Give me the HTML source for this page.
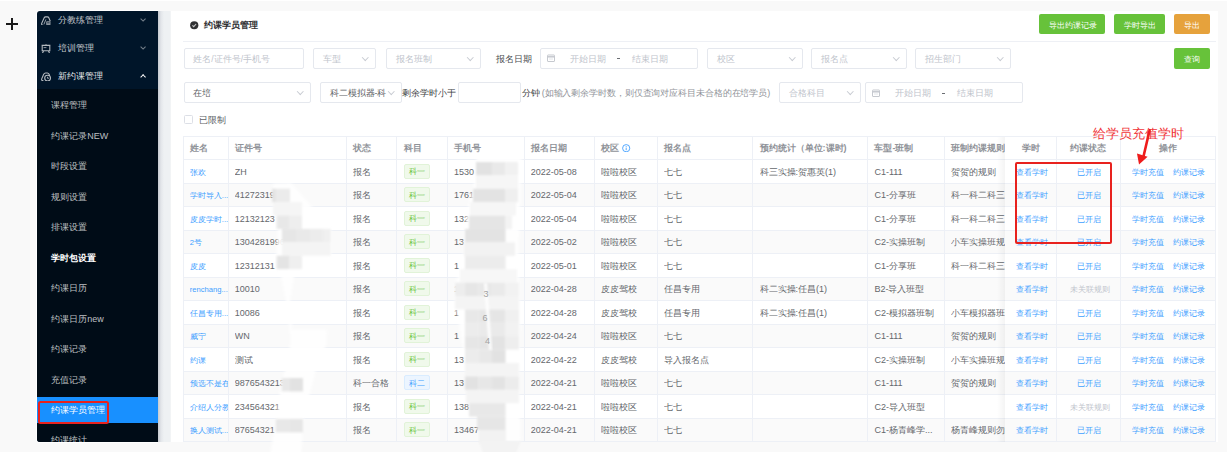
<!DOCTYPE html><html><head><meta charset="utf-8"><style>
*{box-sizing:border-box;margin:0;padding:0}
html,body{width:1227px;height:452px;overflow:hidden;background:#f9f9f9;font-family:"Liberation Sans", sans-serif;}
.abs{position:absolute}
.t{position:absolute;white-space:nowrap;line-height:1;}
.inp{position:absolute;border:1px solid #e5e8ee;border-radius:2px;background:#fff}
.chev{position:absolute;width:4.5px;height:4.5px;border-right:1px solid #c8cbd2;border-bottom:1px solid #c8cbd2;transform:rotate(45deg)}
.btn{position:absolute;height:20px;border-radius:2px}
.ln{position:absolute;background:#edf0f6}
</style></head><body>
<div class="abs" style="left:0;top:0;width:1227px;height:1px;background:#fff"></div>
<div class="abs" style="left:6px;top:23px;width:12px;height:2px;background:#1a1a1a"></div>
<div class="abs" style="left:11px;top:18px;width:2px;height:12px;background:#1a1a1a"></div>
<div class="abs" style="left:36px;top:10px;width:122px;height:433px;background:#fff;border-radius:4px 0 0 4px"></div>
<div class="abs" style="left:37px;top:11px;width:121px;height:431px;background:#001529;border-radius:3px 0 0 3px;overflow:hidden">
<div class="abs" style="left:0;top:78px;width:121px;height:360px;background:#000c17"></div>
</div>
<div class="t" style="left:57.70px;top:16px;font-size:9px;color:rgba(255,255,255,.78);font-weight:normal;">分教练管理</div>
<div class="abs" style="left:141.2px;top:16.85px;width:4.2px;height:4.2px;border-right:1px solid rgba(255,255,255,.45);border-bottom:1px solid rgba(255,255,255,.45);transform:rotate(45deg)"></div>
<div class="t" style="left:57.70px;top:44px;font-size:9px;color:rgba(255,255,255,.78);font-weight:normal;">培训管理</div>
<div class="abs" style="left:141.2px;top:45.00px;width:4.2px;height:4.2px;border-right:1px solid rgba(255,255,255,.45);border-bottom:1px solid rgba(255,255,255,.45);transform:rotate(45deg)"></div>
<div class="t" style="left:57.70px;top:72px;font-size:9px;color:rgba(255,255,255,.92);font-weight:normal;">新约课管理</div>
<div class="abs" style="left:141.2px;top:75.10px;width:4.2px;height:4.2px;border-left:1.5px solid #fff;border-top:1.5px solid #fff;transform:rotate(45deg)"></div>
<svg class="abs" style="left:41px;top:15.5px" width="10" height="9.5" viewBox="0 0 10 9.5"><path d="M1.6 8.7 Q0.2 8.7 0.7 7.4 L3.2 1.8 Q3.6 0.9 4.6 0.9 H6.5 Q7.4 0.9 7.8 1.8 L9.3 5.2" fill="none" stroke="rgba(255,255,255,.7)" stroke-width="1.1"/><path d="M2.9 8.4 L4.9 3.4" stroke="rgba(255,255,255,.7)" stroke-width="0.8"/><rect x="5.2" y="5.3" width="4.3" height="3.7" rx="0.6" fill="rgba(255,255,255,.55)"/><path d="M6.2 6.8 H8.6" stroke="#001529" stroke-width="0.7"/></svg>
<svg class="abs" style="left:41px;top:43.8px" width="10" height="9.5" viewBox="0 0 10 9.5"><path d="M5 0.3 V1.2 M0.6 1.4 H9.4 M1.2 1.4 V6.8 H8.8 V1.4 M2.6 6.8 L1.5 9.2 M7.4 6.8 L8.5 9.2" fill="none" stroke="rgba(255,255,255,.7)" stroke-width="1.1"/><path d="M2.6 3.6 H5.4" stroke="rgba(255,255,255,.7)" stroke-width="0.8"/></svg>
<svg class="abs" style="left:41px;top:71.8px" width="10.5" height="9.5" viewBox="0 0 10.5 9.5"><path d="M2.4 8.6 H1.8 Q0.3 8.6 0.7 6.9 L2.7 2.2 Q3.3 1 4.6 1 H6.3 Q7.5 1 8.1 2.3 L8.6 3.4" fill="none" stroke="rgba(255,255,255,.7)" stroke-width="1.1"/><circle cx="6.6" cy="6.1" r="2.9" fill="#001529" stroke="rgba(255,255,255,.7)" stroke-width="1.1"/><path d="M6.6 4.8 V6.3 H7.8" fill="none" stroke="rgba(255,255,255,.7)" stroke-width="0.9"/></svg>
<div class="t" style="left:51.30px;top:101px;font-size:9px;color:rgba(255,255,255,.74);font-weight:normal;">课程管理</div>
<div class="t" style="left:51.30px;top:132px;font-size:9px;color:rgba(255,255,255,.74);font-weight:normal;">约课记录NEW</div>
<div class="t" style="left:51.30px;top:162px;font-size:9px;color:rgba(255,255,255,.74);font-weight:normal;">时段设置</div>
<div class="t" style="left:51.30px;top:193px;font-size:9px;color:rgba(255,255,255,.74);font-weight:normal;">规则设置</div>
<div class="t" style="left:51.30px;top:223px;font-size:9px;color:rgba(255,255,255,.74);font-weight:normal;">排课设置</div>
<div class="t" style="left:51.30px;top:254px;font-size:9px;color:#fff;font-weight:bold;">学时包设置</div>
<div class="t" style="left:51.30px;top:284px;font-size:9px;color:rgba(255,255,255,.74);font-weight:normal;">约课日历</div>
<div class="t" style="left:51.30px;top:315px;font-size:9px;color:rgba(255,255,255,.74);font-weight:normal;">约课日历new</div>
<div class="t" style="left:51.30px;top:345px;font-size:9px;color:rgba(255,255,255,.74);font-weight:normal;">约课记录</div>
<div class="t" style="left:51.30px;top:376px;font-size:9px;color:rgba(255,255,255,.74);font-weight:normal;">充值记录</div>
<div class="abs" style="left:37px;top:397px;width:121px;height:26px;background:#1890ff"></div>
<div class="t" style="left:51.30px;top:406px;font-size:9px;color:#fff;font-weight:normal;">约课学员管理</div>
<div class="abs" style="left:37px;top:428px;width:121px;height:14px;overflow:hidden;border-radius:0 0 0 4px">
<div class="t" style="left:14.3px;top:8.45px;font-size:9px;color:rgba(255,255,255,.74)">约课统计</div>
</div>
<div class="abs" style="left:38px;top:401px;width:71px;height:22.5px;border:2px solid #e8221e;border-radius:2.5px"></div>
<div class="abs" style="left:158px;top:11px;width:13px;height:431px;background:linear-gradient(to right,#c5cad0 0px,#e3e6ea 3px,#eef1f3 6px,#eef1f3 12px,#f6f7f8 13px)"></div>
<div class="abs" style="left:170.5px;top:11px;width:1047.2px;height:430.6px;background:#fff"></div>
<svg class="abs" style="left:190px;top:21px" width="8.5" height="8.5" viewBox="0 0 8.5 8.5"><circle cx="4.25" cy="4.25" r="4.1" fill="#303133"/><path d="M2.4 4.4 L3.7 5.6 L6.1 3.0" fill="none" stroke="#c8c8c8" stroke-width="1.1"/></svg>
<div class="t" style="left:204.20px;top:21px;font-size:9px;color:#303133;font-weight:bold;">约课学员管理</div>
<div class="ln" style="left:183px;top:41px;width:1033px;height:1px;background:#eef0f5"></div>
<div class="btn" style="left:1039.1px;top:14.3px;width:66.10000000000014px;height:20.2px;background:#67c23a"></div>
<div class="t" style="left:1049.35px;top:22px;font-size:7.6px;color:#fff;font-weight:normal;">导出约课记录</div>
<div class="btn" style="left:1114.1px;top:14.3px;width:51.0px;height:20.2px;background:#67c23a"></div>
<div class="t" style="left:1124.40px;top:22px;font-size:7.6px;color:#fff;font-weight:normal;">学时导出</div>
<div class="btn" style="left:1173.8px;top:14.3px;width:36.0px;height:20.2px;background:#e6a23c"></div>
<div class="t" style="left:1184.20px;top:22px;font-size:7.6px;color:#fff;font-weight:normal;">导出</div>
<div class="btn" style="left:1173.8px;top:48px;width:36.0px;height:20.599999999999994px;background:#67c23a"></div>
<div class="t" style="left:1184.20px;top:56px;font-size:7.6px;color:#fff;font-weight:normal;">查询</div>
<div class="inp" style="left:183.5px;top:48px;width:120.90px;height:20.50px"></div>
<div class="t" style="left:193.30px;top:55px;font-size:8.6px;color:#c0c4cc;font-weight:normal;">姓名/证件号/手机号</div>
<div class="inp" style="left:313.4px;top:48px;width:62.90px;height:20.50px"></div>
<div class="t" style="left:323.20px;top:55px;font-size:8.6px;color:#c0c4cc;font-weight:normal;">车型</div>
<div class="chev" style="left:363.30px;top:54.95px"></div>
<div class="inp" style="left:386px;top:48px;width:94.50px;height:20.50px"></div>
<div class="t" style="left:395.80px;top:55px;font-size:8.6px;color:#c0c4cc;font-weight:normal;">报名班制</div>
<div class="chev" style="left:467.50px;top:54.95px"></div>
<div class="t" style="left:496.00px;top:55px;font-size:9px;color:#4a4c50;font-weight:500;">报名日期</div>
<div class="inp" style="left:540.2px;top:48px;width:158.30px;height:20.50px"></div>
<svg class="abs" style="left:547.00px;top:54.25px" width="8" height="8" viewBox="0 0 8 8"><rect x="0.5" y="1" width="7" height="6.5" rx="0.5" fill="none" stroke="#c6c9cf" stroke-width="1"/><path d="M0.5 2.8 H7.5" stroke="#c6c9cf" stroke-width="1.5"/><path d="M2 5 H6" stroke="#dcdfe4" stroke-width="0.8"/></svg>
<div class="t" style="left:569.70px;top:55px;font-size:8.6px;color:#c0c4cc;font-weight:normal;">开始日期</div>
<div class="abs" style="left:617.20px;top:58.25px;width:3px;height:1.2px;background:#6a6d72"></div>
<div class="t" style="left:631.90px;top:55px;font-size:8.6px;color:#c0c4cc;font-weight:normal;">结束日期</div>
<div class="inp" style="left:707.3px;top:48px;width:95.70px;height:20.50px"></div>
<div class="t" style="left:717.10px;top:55px;font-size:8.6px;color:#c0c4cc;font-weight:normal;">校区</div>
<div class="chev" style="left:790.00px;top:54.95px"></div>
<div class="inp" style="left:811.4px;top:48px;width:95.40px;height:20.50px"></div>
<div class="t" style="left:821.20px;top:55px;font-size:8.6px;color:#c0c4cc;font-weight:normal;">报名点</div>
<div class="chev" style="left:893.80px;top:54.95px"></div>
<div class="inp" style="left:915.4px;top:48px;width:95.80px;height:20.50px"></div>
<div class="t" style="left:925.20px;top:55px;font-size:8.6px;color:#c0c4cc;font-weight:normal;">招生部门</div>
<div class="chev" style="left:998.20px;top:54.95px"></div>
<div class="inp" style="left:183.6px;top:82.3px;width:127.00px;height:20.70px"></div>
<div class="t" style="left:193.40px;top:89px;font-size:8.6px;color:#606266;font-weight:normal;">在培</div>
<div class="chev" style="left:297.60px;top:89.35px"></div>
<div class="inp" style="left:319.8px;top:82.3px;width:82.60px;height:20.70px"></div>
<div class="t" style="left:329.50px;top:89px;font-size:8.6px;color:#606266;font-weight:normal;">科二模拟器-科</div>
<div class="chev" style="left:389.40px;top:89.35px"></div>
<div class="t" style="left:402.40px;top:89px;font-size:9px;color:#3a3c40;font-weight:500;">剩余学时小于</div>
<div class="inp" style="left:457.8px;top:82.3px;width:63.40px;height:20.70px"></div>
<div class="t" style="left:521.70px;top:89px;font-size:9px;color:#3a3c40;font-weight:500;">分钟</div>
<div class="t" style="left:541.80px;top:89px;font-size:9px;color:#909399;font-weight:normal;letter-spacing:-0.1px">(如输入剩余学时数，则仅查询对应科目未合格的在培学员)</div>
<div class="inp" style="left:779.3px;top:82.3px;width:82.10px;height:20.70px"></div>
<div class="t" style="left:789.10px;top:89px;font-size:8.6px;color:#c0c4cc;font-weight:normal;">合格科目</div>
<div class="chev" style="left:848.40px;top:89.35px"></div>
<div class="inp" style="left:865px;top:82.3px;width:158.40px;height:20.70px"></div>
<svg class="abs" style="left:871.80px;top:88.65px" width="8" height="8" viewBox="0 0 8 8"><rect x="0.5" y="1" width="7" height="6.5" rx="0.5" fill="none" stroke="#c6c9cf" stroke-width="1"/><path d="M0.5 2.8 H7.5" stroke="#c6c9cf" stroke-width="1.5"/><path d="M2 5 H6" stroke="#dcdfe4" stroke-width="0.8"/></svg>
<div class="t" style="left:894.50px;top:89px;font-size:8.6px;color:#c0c4cc;font-weight:normal;">开始日期</div>
<div class="abs" style="left:942.00px;top:92.65px;width:3px;height:1.2px;background:#6a6d72"></div>
<div class="t" style="left:956.70px;top:89px;font-size:8.6px;color:#c0c4cc;font-weight:normal;">结束日期</div>
<div class="abs" style="left:183.6px;top:115.4px;width:9px;height:9px;border:1px solid #dcdfe6;border-radius:1.5px;background:#fff"></div>
<div class="t" style="left:199.30px;top:116px;font-size:9px;color:#606266;font-weight:normal;">已限制</div>
<div class="abs" style="left:183.2px;top:183.02px;width:1032.3px;height:23.52px;background:#fafafa"></div>
<div class="abs" style="left:183.2px;top:230.06px;width:1032.3px;height:23.52px;background:#fafafa"></div>
<div class="abs" style="left:183.2px;top:277.10px;width:1032.3px;height:23.52px;background:#fafafa"></div>
<div class="abs" style="left:183.2px;top:324.14px;width:1032.3px;height:23.52px;background:#fafafa"></div>
<div class="abs" style="left:183.2px;top:371.18px;width:1032.3px;height:23.52px;background:#fafafa"></div>
<div class="abs" style="left:183.2px;top:418.22px;width:1032.3px;height:23.52px;background:#fafafa"></div>
<div class="ln" style="left:183.2px;top:136px;width:1032.3px;height:1px"></div>
<div class="ln" style="left:183.2px;top:159px;width:1032.3px;height:1px"></div>
<div class="ln" style="left:183.2px;top:183px;width:1032.3px;height:1px"></div>
<div class="ln" style="left:183.2px;top:206px;width:1032.3px;height:1px"></div>
<div class="ln" style="left:183.2px;top:230px;width:1032.3px;height:1px"></div>
<div class="ln" style="left:183.2px;top:253px;width:1032.3px;height:1px"></div>
<div class="ln" style="left:183.2px;top:277px;width:1032.3px;height:1px"></div>
<div class="ln" style="left:183.2px;top:300px;width:1032.3px;height:1px"></div>
<div class="ln" style="left:183.2px;top:324px;width:1032.3px;height:1px"></div>
<div class="ln" style="left:183.2px;top:347px;width:1032.3px;height:1px"></div>
<div class="ln" style="left:183.2px;top:371px;width:1032.3px;height:1px"></div>
<div class="ln" style="left:183.2px;top:394px;width:1032.3px;height:1px"></div>
<div class="ln" style="left:183.2px;top:418px;width:1032.3px;height:1px"></div>
<div class="ln" style="left:183.2px;top:441px;width:1032.3px;height:1px"></div>
<div class="ln" style="left:183px;top:136.6px;width:1px;height:305.14px"></div>
<div class="ln" style="left:228px;top:136.6px;width:1px;height:305.14px"></div>
<div class="ln" style="left:346px;top:136.6px;width:1px;height:305.14px"></div>
<div class="ln" style="left:396px;top:136.6px;width:1px;height:305.14px"></div>
<div class="ln" style="left:447px;top:136.6px;width:1px;height:305.14px"></div>
<div class="ln" style="left:524px;top:136.6px;width:1px;height:305.14px"></div>
<div class="ln" style="left:594px;top:136.6px;width:1px;height:305.14px"></div>
<div class="ln" style="left:657px;top:136.6px;width:1px;height:305.14px"></div>
<div class="ln" style="left:752px;top:136.6px;width:1px;height:305.14px"></div>
<div class="ln" style="left:867px;top:136.6px;width:1px;height:305.14px"></div>
<div class="ln" style="left:944px;top:136.6px;width:1px;height:305.14px"></div>
<div class="t" style="left:189.80px;top:144px;font-size:9px;color:#909399;font-weight:bold;">姓名</div>
<div class="t" style="left:234.80px;top:144px;font-size:9px;color:#909399;font-weight:bold;">证件号</div>
<div class="t" style="left:353.10px;top:144px;font-size:9px;color:#909399;font-weight:bold;">状态</div>
<div class="t" style="left:403.60px;top:144px;font-size:9px;color:#909399;font-weight:bold;">科目</div>
<div class="t" style="left:453.90px;top:144px;font-size:9px;color:#909399;font-weight:bold;">手机号</div>
<div class="t" style="left:530.80px;top:144px;font-size:9px;color:#909399;font-weight:bold;">报名日期</div>
<div class="t" style="left:601.00px;top:144px;font-size:9px;color:#909399;font-weight:bold;">校区</div>
<div class="t" style="left:663.90px;top:144px;font-size:9px;color:#909399;font-weight:bold;">报名点</div>
<div class="t" style="left:759.60px;top:144px;font-size:9px;color:#909399;font-weight:bold;">预约统计（单位:课时)</div>
<div class="t" style="left:874.40px;top:144px;font-size:9px;color:#909399;font-weight:bold;">车型-班制</div>
<div class="t" style="left:951.30px;top:144px;font-size:9px;color:#909399;font-weight:bold;">班制约课规则</div>
<svg class="abs" style="left:622.4px;top:143.95px" width="8.4" height="8.4" viewBox="0 0 8.4 8.4"><circle cx="4.2" cy="4.2" r="3.6" fill="none" stroke="#409eff" stroke-width="0.9"/><path d="M4.2 3.6 V6.2 M4.2 2.2 V3" stroke="#409eff" stroke-width="0.9"/></svg>
<div class="t" style="left:189.80px;top:169px;font-size:7.6px;color:#409eff;font-weight:normal;width:38.0px;overflow:hidden">张欢</div>
<div class="t" style="left:234.80px;top:168px;font-size:9px;color:#65686d;font-weight:normal;width:111.70px;overflow:hidden">ZH</div>
<div class="t" style="left:353.10px;top:168px;font-size:9px;color:#65686d;font-weight:normal;width:43.90px;overflow:hidden">报名</div>
<div class="t" style="left:453.90px;top:168px;font-size:9px;color:#65686d;font-weight:normal;width:70.30px;overflow:hidden">1530</div>
<div class="t" style="left:530.80px;top:168px;font-size:9px;color:#65686d;font-weight:normal;width:63.60px;overflow:hidden">2022-05-08</div>
<div class="t" style="left:601.00px;top:168px;font-size:9px;color:#65686d;font-weight:normal;width:56.30px;overflow:hidden">啦啦校区</div>
<div class="t" style="left:663.90px;top:168px;font-size:9px;color:#65686d;font-weight:normal;width:89.10px;overflow:hidden">七七</div>
<div class="t" style="left:759.60px;top:168px;font-size:9px;color:#65686d;font-weight:normal;width:108.20px;overflow:hidden">科三实操:贺惠英(1)</div>
<div class="t" style="left:874.40px;top:168px;font-size:9px;color:#65686d;font-weight:normal;width:70.30px;overflow:hidden">C1-111</div>
<div class="t" style="left:951.30px;top:168px;font-size:9px;color:#65686d;font-weight:normal;width:53.70px;overflow:hidden">贺贺的规则</div>
<div class="abs" style="left:403.8px;top:163.76px;width:26.2px;height:15px;background:#f0f9eb;border:1px solid #e1f3d8;border-radius:2px"></div>
<div class="t" style="left:409.30px;top:168px;font-size:7.6px;color:#67c23a;font-weight:normal;">科一</div>
<div class="t" style="left:189.80px;top:192px;font-size:7.6px;color:#409eff;font-weight:normal;width:38.0px;overflow:hidden">学时导入...</div>
<div class="t" style="left:234.80px;top:191px;font-size:9px;color:#65686d;font-weight:normal;width:111.70px;overflow:hidden">41272319</div>
<div class="t" style="left:353.10px;top:191px;font-size:9px;color:#65686d;font-weight:normal;width:43.90px;overflow:hidden">报名</div>
<div class="t" style="left:453.90px;top:191px;font-size:9px;color:#65686d;font-weight:normal;width:70.30px;overflow:hidden">1761</div>
<div class="t" style="left:530.80px;top:191px;font-size:9px;color:#65686d;font-weight:normal;width:63.60px;overflow:hidden">2022-05-04</div>
<div class="t" style="left:601.00px;top:191px;font-size:9px;color:#65686d;font-weight:normal;width:56.30px;overflow:hidden">啦啦校区</div>
<div class="t" style="left:663.90px;top:191px;font-size:9px;color:#65686d;font-weight:normal;width:89.10px;overflow:hidden">七七</div>
<div class="t" style="left:874.40px;top:191px;font-size:9px;color:#65686d;font-weight:normal;width:70.30px;overflow:hidden">C1-分享班</div>
<div class="t" style="left:951.30px;top:191px;font-size:9px;color:#65686d;font-weight:normal;width:53.70px;overflow:hidden">科一科二科三科</div>
<div class="abs" style="left:403.8px;top:187.28px;width:26.2px;height:15px;background:#f0f9eb;border:1px solid #e1f3d8;border-radius:2px"></div>
<div class="t" style="left:409.30px;top:192px;font-size:7.6px;color:#67c23a;font-weight:normal;">科一</div>
<div class="t" style="left:189.80px;top:216px;font-size:7.6px;color:#409eff;font-weight:normal;width:38.0px;overflow:hidden">皮皮学时...</div>
<div class="t" style="left:234.80px;top:215px;font-size:9px;color:#65686d;font-weight:normal;width:111.70px;overflow:hidden">12132123</div>
<div class="t" style="left:353.10px;top:215px;font-size:9px;color:#65686d;font-weight:normal;width:43.90px;overflow:hidden">报名</div>
<div class="t" style="left:453.90px;top:215px;font-size:9px;color:#65686d;font-weight:normal;width:70.30px;overflow:hidden">132</div>
<div class="t" style="left:530.80px;top:215px;font-size:9px;color:#65686d;font-weight:normal;width:63.60px;overflow:hidden">2022-05-04</div>
<div class="t" style="left:601.00px;top:215px;font-size:9px;color:#65686d;font-weight:normal;width:56.30px;overflow:hidden">啦啦校区</div>
<div class="t" style="left:663.90px;top:215px;font-size:9px;color:#65686d;font-weight:normal;width:89.10px;overflow:hidden">七七</div>
<div class="t" style="left:874.40px;top:215px;font-size:9px;color:#65686d;font-weight:normal;width:70.30px;overflow:hidden">C1-分享班</div>
<div class="t" style="left:951.30px;top:215px;font-size:9px;color:#65686d;font-weight:normal;width:53.70px;overflow:hidden">科一科二科三科</div>
<div class="abs" style="left:403.8px;top:210.80px;width:26.2px;height:15px;background:#f0f9eb;border:1px solid #e1f3d8;border-radius:2px"></div>
<div class="t" style="left:409.30px;top:215px;font-size:7.6px;color:#67c23a;font-weight:normal;">科一</div>
<div class="t" style="left:189.80px;top:239px;font-size:7.6px;color:#409eff;font-weight:normal;width:38.0px;overflow:hidden">2号</div>
<div class="t" style="left:234.80px;top:238px;font-size:9px;color:#65686d;font-weight:normal;width:111.70px;overflow:hidden">1304281996</div>
<div class="t" style="left:353.10px;top:238px;font-size:9px;color:#65686d;font-weight:normal;width:43.90px;overflow:hidden">报名</div>
<div class="t" style="left:453.90px;top:238px;font-size:9px;color:#65686d;font-weight:normal;width:70.30px;overflow:hidden">13</div>
<div class="t" style="left:530.80px;top:238px;font-size:9px;color:#65686d;font-weight:normal;width:63.60px;overflow:hidden">2022-05-02</div>
<div class="t" style="left:601.00px;top:238px;font-size:9px;color:#65686d;font-weight:normal;width:56.30px;overflow:hidden">啦啦校区</div>
<div class="t" style="left:663.90px;top:238px;font-size:9px;color:#65686d;font-weight:normal;width:89.10px;overflow:hidden">七七</div>
<div class="t" style="left:874.40px;top:238px;font-size:9px;color:#65686d;font-weight:normal;width:70.30px;overflow:hidden">C2-实操班制</div>
<div class="t" style="left:951.30px;top:238px;font-size:9px;color:#65686d;font-weight:normal;width:53.70px;overflow:hidden">小车实操班规则</div>
<div class="abs" style="left:403.8px;top:234.32px;width:26.2px;height:15px;background:#f0f9eb;border:1px solid #e1f3d8;border-radius:2px"></div>
<div class="t" style="left:409.30px;top:239px;font-size:7.6px;color:#67c23a;font-weight:normal;">科一</div>
<div class="t" style="left:189.80px;top:263px;font-size:7.6px;color:#409eff;font-weight:normal;width:38.0px;overflow:hidden">皮皮</div>
<div class="t" style="left:234.80px;top:262px;font-size:9px;color:#65686d;font-weight:normal;width:111.70px;overflow:hidden">12312131</div>
<div class="t" style="left:353.10px;top:262px;font-size:9px;color:#65686d;font-weight:normal;width:43.90px;overflow:hidden">报名</div>
<div class="t" style="left:453.90px;top:262px;font-size:9px;color:#65686d;font-weight:normal;width:70.30px;overflow:hidden">1</div>
<div class="t" style="left:530.80px;top:262px;font-size:9px;color:#65686d;font-weight:normal;width:63.60px;overflow:hidden">2022-05-01</div>
<div class="t" style="left:601.00px;top:262px;font-size:9px;color:#65686d;font-weight:normal;width:56.30px;overflow:hidden">啦啦校区</div>
<div class="t" style="left:663.90px;top:262px;font-size:9px;color:#65686d;font-weight:normal;width:89.10px;overflow:hidden">七七</div>
<div class="t" style="left:874.40px;top:262px;font-size:9px;color:#65686d;font-weight:normal;width:70.30px;overflow:hidden">C1-分享班</div>
<div class="t" style="left:951.30px;top:262px;font-size:9px;color:#65686d;font-weight:normal;width:53.70px;overflow:hidden">科一科二科三科</div>
<div class="abs" style="left:403.8px;top:257.84px;width:26.2px;height:15px;background:#f0f9eb;border:1px solid #e1f3d8;border-radius:2px"></div>
<div class="t" style="left:409.30px;top:262px;font-size:7.6px;color:#67c23a;font-weight:normal;">科一</div>
<div class="t" style="left:189.80px;top:286px;font-size:7.6px;color:#409eff;font-weight:normal;width:38.0px;overflow:hidden">renchang...</div>
<div class="t" style="left:234.80px;top:285px;font-size:9px;color:#65686d;font-weight:normal;width:111.70px;overflow:hidden">10010</div>
<div class="t" style="left:353.10px;top:285px;font-size:9px;color:#65686d;font-weight:normal;width:43.90px;overflow:hidden">报名</div>
<div class="t" style="left:453.90px;top:285px;font-size:9px;color:#65686d;font-weight:normal;width:70.30px;overflow:hidden">1</div>
<div class="t" style="left:530.80px;top:285px;font-size:9px;color:#65686d;font-weight:normal;width:63.60px;overflow:hidden">2022-04-28</div>
<div class="t" style="left:601.00px;top:285px;font-size:9px;color:#65686d;font-weight:normal;width:56.30px;overflow:hidden">皮皮驾校</div>
<div class="t" style="left:663.90px;top:285px;font-size:9px;color:#65686d;font-weight:normal;width:89.10px;overflow:hidden">任昌专用</div>
<div class="t" style="left:759.60px;top:285px;font-size:9px;color:#65686d;font-weight:normal;width:108.20px;overflow:hidden">科二实操:任昌(1)</div>
<div class="t" style="left:874.40px;top:285px;font-size:9px;color:#65686d;font-weight:normal;width:70.30px;overflow:hidden">B2-导入班型</div>
<div class="abs" style="left:403.8px;top:281.36px;width:26.2px;height:15px;background:#f0f9eb;border:1px solid #e1f3d8;border-radius:2px"></div>
<div class="t" style="left:409.30px;top:286px;font-size:7.6px;color:#67c23a;font-weight:normal;">科一</div>
<div class="t" style="left:189.80px;top:310px;font-size:7.6px;color:#409eff;font-weight:normal;width:38.0px;overflow:hidden">任昌专用...</div>
<div class="t" style="left:234.80px;top:309px;font-size:9px;color:#65686d;font-weight:normal;width:111.70px;overflow:hidden">10086</div>
<div class="t" style="left:353.10px;top:309px;font-size:9px;color:#65686d;font-weight:normal;width:43.90px;overflow:hidden">报名</div>
<div class="t" style="left:453.90px;top:309px;font-size:9px;color:#65686d;font-weight:normal;width:70.30px;overflow:hidden">1</div>
<div class="t" style="left:530.80px;top:309px;font-size:9px;color:#65686d;font-weight:normal;width:63.60px;overflow:hidden">2022-04-28</div>
<div class="t" style="left:601.00px;top:309px;font-size:9px;color:#65686d;font-weight:normal;width:56.30px;overflow:hidden">皮皮驾校</div>
<div class="t" style="left:663.90px;top:309px;font-size:9px;color:#65686d;font-weight:normal;width:89.10px;overflow:hidden">任昌专用</div>
<div class="t" style="left:759.60px;top:309px;font-size:9px;color:#65686d;font-weight:normal;width:108.20px;overflow:hidden">科二实操:任昌(1)</div>
<div class="t" style="left:874.40px;top:309px;font-size:9px;color:#65686d;font-weight:normal;width:70.30px;overflow:hidden">C2-模拟器班制</div>
<div class="t" style="left:951.30px;top:309px;font-size:9px;color:#65686d;font-weight:normal;width:53.70px;overflow:hidden">小车模拟器班规</div>
<div class="abs" style="left:403.8px;top:304.88px;width:26.2px;height:15px;background:#f0f9eb;border:1px solid #e1f3d8;border-radius:2px"></div>
<div class="t" style="left:409.30px;top:309px;font-size:7.6px;color:#67c23a;font-weight:normal;">科一</div>
<div class="t" style="left:189.80px;top:333px;font-size:7.6px;color:#409eff;font-weight:normal;width:38.0px;overflow:hidden">威宁</div>
<div class="t" style="left:234.80px;top:332px;font-size:9px;color:#65686d;font-weight:normal;width:111.70px;overflow:hidden">WN</div>
<div class="t" style="left:353.10px;top:332px;font-size:9px;color:#65686d;font-weight:normal;width:43.90px;overflow:hidden">报名</div>
<div class="t" style="left:453.90px;top:332px;font-size:9px;color:#65686d;font-weight:normal;width:70.30px;overflow:hidden">1</div>
<div class="t" style="left:530.80px;top:332px;font-size:9px;color:#65686d;font-weight:normal;width:63.60px;overflow:hidden">2022-04-24</div>
<div class="t" style="left:601.00px;top:332px;font-size:9px;color:#65686d;font-weight:normal;width:56.30px;overflow:hidden">啦啦校区</div>
<div class="t" style="left:663.90px;top:332px;font-size:9px;color:#65686d;font-weight:normal;width:89.10px;overflow:hidden">七七</div>
<div class="t" style="left:874.40px;top:332px;font-size:9px;color:#65686d;font-weight:normal;width:70.30px;overflow:hidden">C1-111</div>
<div class="t" style="left:951.30px;top:332px;font-size:9px;color:#65686d;font-weight:normal;width:53.70px;overflow:hidden">贺贺的规则</div>
<div class="abs" style="left:403.8px;top:328.40px;width:26.2px;height:15px;background:#f0f9eb;border:1px solid #e1f3d8;border-radius:2px"></div>
<div class="t" style="left:409.30px;top:333px;font-size:7.6px;color:#67c23a;font-weight:normal;">科一</div>
<div class="t" style="left:189.80px;top:357px;font-size:7.6px;color:#409eff;font-weight:normal;width:38.0px;overflow:hidden">约课</div>
<div class="t" style="left:234.80px;top:356px;font-size:9px;color:#65686d;font-weight:normal;width:111.70px;overflow:hidden">测试</div>
<div class="t" style="left:353.10px;top:356px;font-size:9px;color:#65686d;font-weight:normal;width:43.90px;overflow:hidden">报名</div>
<div class="t" style="left:453.90px;top:356px;font-size:9px;color:#65686d;font-weight:normal;width:70.30px;overflow:hidden">13</div>
<div class="t" style="left:530.80px;top:356px;font-size:9px;color:#65686d;font-weight:normal;width:63.60px;overflow:hidden">2022-04-22</div>
<div class="t" style="left:601.00px;top:356px;font-size:9px;color:#65686d;font-weight:normal;width:56.30px;overflow:hidden">皮皮驾校</div>
<div class="t" style="left:663.90px;top:356px;font-size:9px;color:#65686d;font-weight:normal;width:89.10px;overflow:hidden">导入报名点</div>
<div class="t" style="left:874.40px;top:356px;font-size:9px;color:#65686d;font-weight:normal;width:70.30px;overflow:hidden">C2-实操班制</div>
<div class="t" style="left:951.30px;top:356px;font-size:9px;color:#65686d;font-weight:normal;width:53.70px;overflow:hidden">小车实操班规则</div>
<div class="abs" style="left:403.8px;top:351.92px;width:26.2px;height:15px;background:#f0f9eb;border:1px solid #e1f3d8;border-radius:2px"></div>
<div class="t" style="left:409.30px;top:356px;font-size:7.6px;color:#67c23a;font-weight:normal;">科一</div>
<div class="t" style="left:189.80px;top:380px;font-size:7.6px;color:#409eff;font-weight:normal;width:38.0px;overflow:hidden">预选不是在</div>
<div class="t" style="left:234.80px;top:379px;font-size:9px;color:#65686d;font-weight:normal;width:111.70px;overflow:hidden">9876543213</div>
<div class="t" style="left:353.10px;top:379px;font-size:9px;color:#65686d;font-weight:normal;width:43.90px;overflow:hidden">科一合格</div>
<div class="t" style="left:453.90px;top:379px;font-size:9px;color:#65686d;font-weight:normal;width:70.30px;overflow:hidden">13</div>
<div class="t" style="left:530.80px;top:379px;font-size:9px;color:#65686d;font-weight:normal;width:63.60px;overflow:hidden">2022-04-21</div>
<div class="t" style="left:601.00px;top:379px;font-size:9px;color:#65686d;font-weight:normal;width:56.30px;overflow:hidden">啦啦校区</div>
<div class="t" style="left:663.90px;top:379px;font-size:9px;color:#65686d;font-weight:normal;width:89.10px;overflow:hidden">七七</div>
<div class="t" style="left:874.40px;top:379px;font-size:9px;color:#65686d;font-weight:normal;width:70.30px;overflow:hidden">C1-111</div>
<div class="t" style="left:951.30px;top:379px;font-size:9px;color:#65686d;font-weight:normal;width:53.70px;overflow:hidden">贺贺的规则</div>
<div class="abs" style="left:403.8px;top:375.44px;width:26.2px;height:15px;background:#ecf5ff;border:1px solid #d9ecff;border-radius:2px"></div>
<div class="t" style="left:409.30px;top:380px;font-size:7.6px;color:#409eff;font-weight:normal;">科二</div>
<div class="t" style="left:189.80px;top:404px;font-size:7.6px;color:#409eff;font-weight:normal;width:38.0px;overflow:hidden">介绍人分教</div>
<div class="t" style="left:234.80px;top:403px;font-size:9px;color:#65686d;font-weight:normal;width:111.70px;overflow:hidden">234564321</div>
<div class="t" style="left:353.10px;top:403px;font-size:9px;color:#65686d;font-weight:normal;width:43.90px;overflow:hidden">报名</div>
<div class="t" style="left:453.90px;top:403px;font-size:9px;color:#65686d;font-weight:normal;width:70.30px;overflow:hidden">138</div>
<div class="t" style="left:530.80px;top:403px;font-size:9px;color:#65686d;font-weight:normal;width:63.60px;overflow:hidden">2022-04-21</div>
<div class="t" style="left:601.00px;top:403px;font-size:9px;color:#65686d;font-weight:normal;width:56.30px;overflow:hidden">啦啦校区</div>
<div class="t" style="left:663.90px;top:403px;font-size:9px;color:#65686d;font-weight:normal;width:89.10px;overflow:hidden">七七</div>
<div class="t" style="left:874.40px;top:403px;font-size:9px;color:#65686d;font-weight:normal;width:70.30px;overflow:hidden">C2-导入班型</div>
<div class="abs" style="left:403.8px;top:398.96px;width:26.2px;height:15px;background:#f0f9eb;border:1px solid #e1f3d8;border-radius:2px"></div>
<div class="t" style="left:409.30px;top:403px;font-size:7.6px;color:#67c23a;font-weight:normal;">科一</div>
<div class="t" style="left:189.80px;top:427px;font-size:7.6px;color:#409eff;font-weight:normal;width:38.0px;overflow:hidden">换人测试...</div>
<div class="t" style="left:234.80px;top:426px;font-size:9px;color:#65686d;font-weight:normal;width:111.70px;overflow:hidden">87654321</div>
<div class="t" style="left:353.10px;top:426px;font-size:9px;color:#65686d;font-weight:normal;width:43.90px;overflow:hidden">报名</div>
<div class="t" style="left:453.90px;top:426px;font-size:9px;color:#65686d;font-weight:normal;width:70.30px;overflow:hidden">13467</div>
<div class="t" style="left:530.80px;top:426px;font-size:9px;color:#65686d;font-weight:normal;width:63.60px;overflow:hidden">2022-04-21</div>
<div class="t" style="left:601.00px;top:426px;font-size:9px;color:#65686d;font-weight:normal;width:56.30px;overflow:hidden">啦啦校区</div>
<div class="t" style="left:663.90px;top:426px;font-size:9px;color:#65686d;font-weight:normal;width:89.10px;overflow:hidden">七七</div>
<div class="t" style="left:874.40px;top:426px;font-size:9px;color:#65686d;font-weight:normal;width:70.30px;overflow:hidden">C1-杨青峰学...</div>
<div class="t" style="left:951.30px;top:426px;font-size:9px;color:#65686d;font-weight:normal;width:53.70px;overflow:hidden">杨青峰规则勿删</div>
<div class="abs" style="left:403.8px;top:422.48px;width:26.2px;height:15px;background:#f0f9eb;border:1px solid #e1f3d8;border-radius:2px"></div>
<div class="t" style="left:409.30px;top:427px;font-size:7.6px;color:#67c23a;font-weight:normal;">科一</div>
<svg class="abs" style="left:0;top:0" width="1227" height="452" viewBox="0 0 1227 452">
<defs><filter id="bl" x="-20%" y="-5%" width="140%" height="110%"><feGaussianBlur stdDeviation="1.5"/></filter>
<filter id="bl2" x="-5%" y="-1%" width="110%" height="102%"><feGaussianBlur stdDeviation="0.9"/></filter></defs>
<g filter="url(#bl)">
<path d="M273 184 L291 183 L310 205 L331 228 L331 256 L302 269 L294 276 L290 300 L292 330 L327 330 L326 345 L317 365 L303 420 L301 456 L270 456 L276 420 L282 380 L287 365 L291 340 L286 300 L280 270 L276 256 L278 230 L274 205 Z" fill="rgba(255,255,255,0.88)"/>
<path d="M477 153 L522 151 L520 200 L518 260 L520 320 L518 390 L521 441 L481 441 L479 418 L470 404 L468 404 L466 366 L455 300 L455 283 L462 270 L466 220 L470 200 L474 186 Z" fill="rgba(255,255,255,0.88)"/>
</g>
<g filter="url(#bl2)"><rect x="476" y="162.0" width="16.00" height="13.4" fill="#e2e2e2"/><rect x="492" y="162.0" width="13.50" height="13.4" fill="#e9e9e9"/><rect x="505.5" y="162.0" width="12.50" height="13.4" fill="#f1f1f1"/><rect x="476" y="175.4" width="42.00" height="13.4" fill="#f6f6f6"/><rect x="473" y="188.8" width="32.50" height="13.4" fill="#e3e3e3"/><rect x="505.5" y="188.8" width="12.50" height="13.4" fill="#efefef"/><rect x="470" y="202.2" width="46.00" height="13.4" fill="#f6f6f6"/><rect x="469" y="215.6" width="36.50" height="13.4" fill="#e5e5e5"/><rect x="505.5" y="215.6" width="6.50" height="13.4" fill="#f3f3f3"/><rect x="465" y="229.0" width="40.50" height="13.4" fill="#e3e3e3"/><rect x="464" y="242.4" width="51.00" height="13.4" fill="#f2f2f2"/><rect x="465" y="255.8" width="40.50" height="13.4" fill="#ececec"/><rect x="460" y="269.2" width="57.00" height="13.4" fill="#f7f7f7"/><rect x="455" y="282.6" width="10.00" height="13.4" fill="#ededed"/><rect x="465" y="282.6" width="13.50" height="13.4" fill="#e6e6e6"/><rect x="478.5" y="282.6" width="13.50" height="13.4" fill="#e8e8e8"/><rect x="492" y="282.6" width="13.50" height="13.4" fill="#eaeaea"/><rect x="505.5" y="282.6" width="13.50" height="13.4" fill="#f2f2f2"/><rect x="455" y="296.0" width="64.00" height="13.4" fill="#f4f4f4"/><rect x="465" y="309.4" width="13.50" height="13.4" fill="#e8e8e8"/><rect x="478.5" y="309.4" width="13.50" height="13.4" fill="#e6e6e6"/><rect x="492" y="309.4" width="13.50" height="13.4" fill="#e5e5e5"/><rect x="505.5" y="309.4" width="13.50" height="13.4" fill="#f0f0f0"/><rect x="465" y="322.8" width="13.50" height="13.4" fill="#ececec"/><rect x="478.5" y="322.8" width="27.00" height="13.4" fill="#eaeaea"/><rect x="505.5" y="322.8" width="13.50" height="13.4" fill="#f2f2f2"/><rect x="465" y="336.2" width="13.50" height="13.4" fill="#e6e6e6"/><rect x="478.5" y="336.2" width="13.50" height="13.4" fill="#e4e4e4"/><rect x="492" y="336.2" width="13.50" height="13.4" fill="#e3e3e3"/><rect x="505.5" y="336.2" width="13.50" height="13.4" fill="#eeeeee"/><rect x="465" y="349.6" width="13.50" height="13.4" fill="#ececec"/><rect x="478.5" y="349.6" width="13.50" height="13.4" fill="#e8e8e8"/><rect x="492" y="349.6" width="13.50" height="13.4" fill="#e2e2e2"/><rect x="465" y="363.0" width="54.00" height="13.4" fill="#f4f4f4"/><rect x="465" y="376.4" width="13.50" height="13.4" fill="#e2e2e2"/><rect x="478.5" y="376.4" width="13.50" height="13.4" fill="#e7e7e7"/><rect x="492" y="376.4" width="13.50" height="13.4" fill="#e3e3e3"/><rect x="505.5" y="376.4" width="13.50" height="13.4" fill="#ececec"/><rect x="466" y="389.8" width="53.00" height="13.4" fill="#f4f4f4"/><rect x="469" y="403.2" width="36.50" height="13.4" fill="#e8e8e8"/><rect x="477" y="416.6" width="28.50" height="13.4" fill="#e6e6e6"/><rect x="479" y="430.0" width="27.00" height="13.4" fill="#f2f2f2"/><rect x="272" y="188.7" width="4.00" height="13.4" fill="#e4e4e4"/><rect x="276" y="188.7" width="14.00" height="13.4" fill="#ebebeb"/><rect x="273" y="202.1" width="29.00" height="13.4" fill="#f5f5f5"/><rect x="276.6" y="215.5" width="12.40" height="13.4" fill="#e8e8e8"/><rect x="289" y="215.5" width="13.00" height="13.4" fill="#eeeeee"/><rect x="282" y="228.9" width="14.00" height="13.4" fill="#e6e6e6"/><rect x="296" y="228.9" width="14.00" height="13.4" fill="#e9e9e9"/><rect x="310" y="228.9" width="13.00" height="13.4" fill="#ececec"/><rect x="323" y="228.9" width="7.70" height="13.4" fill="#f0f0f0"/><rect x="282" y="242.3" width="48.70" height="13.4" fill="#f4f4f4"/><rect x="276.6" y="255.7" width="12.40" height="13.4" fill="#e4e4e4"/><rect x="289" y="255.7" width="13.00" height="13.4" fill="#efefef"/><rect x="281.7" y="378.0" width="8.30" height="13.4" fill="#e8e8e8"/><rect x="290" y="378.0" width="13.00" height="13.4" fill="#e2e2e2"/><rect x="275.6" y="419.0" width="14.40" height="13.4" fill="#e8e8e8"/><rect x="290" y="419.0" width="13.00" height="13.4" fill="#e6e6e6"/></g>
<path d="M479 441 L521 441 L516 453 L483 453 Z" fill="#f3f3f3" filter="url(#bl2)"/>
<path d="M484 283 L487 283 L492 350 L489 350 Z" fill="rgba(255,255,255,0.9)" filter="url(#bl2)"/>
</svg>
<div class="t" style="left:483.50px;top:290px;font-size:9px;color:#a0a0a0;font-weight:normal;">3</div>
<div class="t" style="left:482.50px;top:314px;font-size:9px;color:#a0a0a0;font-weight:normal;">6</div>
<div class="t" style="left:485.00px;top:337px;font-size:9px;color:#a0a0a0;font-weight:normal;">4</div>
<div class="abs" style="left:997px;top:136.6px;width:8px;height:305.14px;background:linear-gradient(to right,rgba(0,0,0,0),rgba(0,0,0,.045))"></div>
<div class="abs" style="left:1005px;top:136.6px;width:210.5px;height:305.14px;background:#fff"></div>
<div class="abs" style="left:1005px;top:183.02px;width:210.5px;height:23.52px;background:#fafafa"></div>
<div class="abs" style="left:1005px;top:230.06px;width:210.5px;height:23.52px;background:#fafafa"></div>
<div class="abs" style="left:1005px;top:277.10px;width:210.5px;height:23.52px;background:#fafafa"></div>
<div class="abs" style="left:1005px;top:324.14px;width:210.5px;height:23.52px;background:#fafafa"></div>
<div class="abs" style="left:1005px;top:371.18px;width:210.5px;height:23.52px;background:#fafafa"></div>
<div class="abs" style="left:1005px;top:418.22px;width:210.5px;height:23.52px;background:#fafafa"></div>
<div class="ln" style="left:1005px;top:136px;width:210.5px;height:1px"></div>
<div class="ln" style="left:1005px;top:159px;width:210.5px;height:1px"></div>
<div class="ln" style="left:1005px;top:183px;width:210.5px;height:1px"></div>
<div class="ln" style="left:1005px;top:206px;width:210.5px;height:1px"></div>
<div class="ln" style="left:1005px;top:230px;width:210.5px;height:1px"></div>
<div class="ln" style="left:1005px;top:253px;width:210.5px;height:1px"></div>
<div class="ln" style="left:1005px;top:277px;width:210.5px;height:1px"></div>
<div class="ln" style="left:1005px;top:300px;width:210.5px;height:1px"></div>
<div class="ln" style="left:1005px;top:324px;width:210.5px;height:1px"></div>
<div class="ln" style="left:1005px;top:347px;width:210.5px;height:1px"></div>
<div class="ln" style="left:1005px;top:371px;width:210.5px;height:1px"></div>
<div class="ln" style="left:1005px;top:394px;width:210.5px;height:1px"></div>
<div class="ln" style="left:1005px;top:418px;width:210.5px;height:1px"></div>
<div class="ln" style="left:1005px;top:441px;width:210.5px;height:1px"></div>
<div class="ln" style="left:1056px;top:136.6px;width:1px;height:305.14px"></div>
<div class="ln" style="left:1120px;top:136.6px;width:1px;height:305.14px"></div>
<div class="ln" style="left:1215px;top:136.6px;width:1px;height:305.14px"></div>
<div class="t" style="left:1021.70px;top:144px;font-size:9px;color:#909399;font-weight:bold;">学时</div>
<div class="t" style="left:1070.45px;top:144px;font-size:9px;color:#909399;font-weight:bold;">约课状态</div>
<div class="t" style="left:1159.00px;top:144px;font-size:9px;color:#909399;font-weight:bold;">操作</div>
<div class="t" style="left:1016.40px;top:169px;font-size:7.6px;color:#409eff;font-weight:normal;">查看学时</div>
<div class="t" style="left:1077.20px;top:169px;font-size:7.6px;color:#409eff;font-weight:normal;">已开启</div>
<div class="t" style="left:1132.30px;top:169px;font-size:7.6px;color:#409eff;font-weight:normal;">学时充值</div>
<div class="t" style="left:1173.00px;top:169px;font-size:7.6px;color:#409eff;font-weight:normal;">约课记录</div>
<div class="t" style="left:1016.40px;top:192px;font-size:7.6px;color:#409eff;font-weight:normal;">查看学时</div>
<div class="t" style="left:1077.20px;top:192px;font-size:7.6px;color:#409eff;font-weight:normal;">已开启</div>
<div class="t" style="left:1132.30px;top:192px;font-size:7.6px;color:#409eff;font-weight:normal;">学时充值</div>
<div class="t" style="left:1173.00px;top:192px;font-size:7.6px;color:#409eff;font-weight:normal;">约课记录</div>
<div class="t" style="left:1016.40px;top:216px;font-size:7.6px;color:#409eff;font-weight:normal;">查看学时</div>
<div class="t" style="left:1077.20px;top:216px;font-size:7.6px;color:#409eff;font-weight:normal;">已开启</div>
<div class="t" style="left:1132.30px;top:216px;font-size:7.6px;color:#409eff;font-weight:normal;">学时充值</div>
<div class="t" style="left:1173.00px;top:216px;font-size:7.6px;color:#409eff;font-weight:normal;">约课记录</div>
<div class="t" style="left:1016.40px;top:239px;font-size:7.6px;color:#409eff;font-weight:normal;">查看学时</div>
<div class="t" style="left:1077.20px;top:239px;font-size:7.6px;color:#409eff;font-weight:normal;">已开启</div>
<div class="t" style="left:1132.30px;top:239px;font-size:7.6px;color:#409eff;font-weight:normal;">学时充值</div>
<div class="t" style="left:1173.00px;top:239px;font-size:7.6px;color:#409eff;font-weight:normal;">约课记录</div>
<div class="t" style="left:1016.40px;top:263px;font-size:7.6px;color:#409eff;font-weight:normal;">查看学时</div>
<div class="t" style="left:1077.20px;top:263px;font-size:7.6px;color:#409eff;font-weight:normal;">已开启</div>
<div class="t" style="left:1132.30px;top:263px;font-size:7.6px;color:#409eff;font-weight:normal;">学时充值</div>
<div class="t" style="left:1173.00px;top:263px;font-size:7.6px;color:#409eff;font-weight:normal;">约课记录</div>
<div class="t" style="left:1016.40px;top:286px;font-size:7.6px;color:#409eff;font-weight:normal;">查看学时</div>
<div class="t" style="left:1069.60px;top:286px;font-size:7.6px;color:#c0c4cc;font-weight:normal;">未关联规则</div>
<div class="t" style="left:1132.30px;top:286px;font-size:7.6px;color:#409eff;font-weight:normal;">学时充值</div>
<div class="t" style="left:1173.00px;top:286px;font-size:7.6px;color:#409eff;font-weight:normal;">约课记录</div>
<div class="t" style="left:1016.40px;top:310px;font-size:7.6px;color:#409eff;font-weight:normal;">查看学时</div>
<div class="t" style="left:1077.20px;top:310px;font-size:7.6px;color:#409eff;font-weight:normal;">已开启</div>
<div class="t" style="left:1132.30px;top:310px;font-size:7.6px;color:#409eff;font-weight:normal;">学时充值</div>
<div class="t" style="left:1173.00px;top:310px;font-size:7.6px;color:#409eff;font-weight:normal;">约课记录</div>
<div class="t" style="left:1016.40px;top:333px;font-size:7.6px;color:#409eff;font-weight:normal;">查看学时</div>
<div class="t" style="left:1077.20px;top:333px;font-size:7.6px;color:#409eff;font-weight:normal;">已开启</div>
<div class="t" style="left:1132.30px;top:333px;font-size:7.6px;color:#409eff;font-weight:normal;">学时充值</div>
<div class="t" style="left:1173.00px;top:333px;font-size:7.6px;color:#409eff;font-weight:normal;">约课记录</div>
<div class="t" style="left:1016.40px;top:357px;font-size:7.6px;color:#409eff;font-weight:normal;">查看学时</div>
<div class="t" style="left:1077.20px;top:357px;font-size:7.6px;color:#409eff;font-weight:normal;">已开启</div>
<div class="t" style="left:1132.30px;top:357px;font-size:7.6px;color:#409eff;font-weight:normal;">学时充值</div>
<div class="t" style="left:1173.00px;top:357px;font-size:7.6px;color:#409eff;font-weight:normal;">约课记录</div>
<div class="t" style="left:1016.40px;top:380px;font-size:7.6px;color:#409eff;font-weight:normal;">查看学时</div>
<div class="t" style="left:1077.20px;top:380px;font-size:7.6px;color:#409eff;font-weight:normal;">已开启</div>
<div class="t" style="left:1132.30px;top:380px;font-size:7.6px;color:#409eff;font-weight:normal;">学时充值</div>
<div class="t" style="left:1173.00px;top:380px;font-size:7.6px;color:#409eff;font-weight:normal;">约课记录</div>
<div class="t" style="left:1016.40px;top:404px;font-size:7.6px;color:#409eff;font-weight:normal;">查看学时</div>
<div class="t" style="left:1069.60px;top:404px;font-size:7.6px;color:#c0c4cc;font-weight:normal;">未关联规则</div>
<div class="t" style="left:1132.30px;top:404px;font-size:7.6px;color:#409eff;font-weight:normal;">学时充值</div>
<div class="t" style="left:1173.00px;top:404px;font-size:7.6px;color:#409eff;font-weight:normal;">约课记录</div>
<div class="t" style="left:1016.40px;top:427px;font-size:7.6px;color:#409eff;font-weight:normal;">查看学时</div>
<div class="t" style="left:1077.20px;top:427px;font-size:7.6px;color:#409eff;font-weight:normal;">已开启</div>
<div class="t" style="left:1132.30px;top:427px;font-size:7.6px;color:#409eff;font-weight:normal;">学时充值</div>
<div class="t" style="left:1173.00px;top:427px;font-size:7.6px;color:#409eff;font-weight:normal;">约课记录</div>
<div class="abs" style="left:1015px;top:161.5px;width:97px;height:82.5px;border:2px solid #e8221e;border-radius:2px"></div>
<div class="t" style="left:1092.70px;top:127px;font-size:13.3px;color:#f0353a;font-weight:normal;">给学员充值学时</div>
<svg class="abs" style="left:1130px;top:128px" width="24" height="40" viewBox="0 0 24 40"><path d="M19.6 2.2 L13.6 28" stroke="#ee1c1c" stroke-width="2.6" fill="none" stroke-linecap="round"/><path d="M7 25.6 L17.6 28.8 L9 36.5 Z" fill="#ee1c1c"/></svg>
</body></html>
